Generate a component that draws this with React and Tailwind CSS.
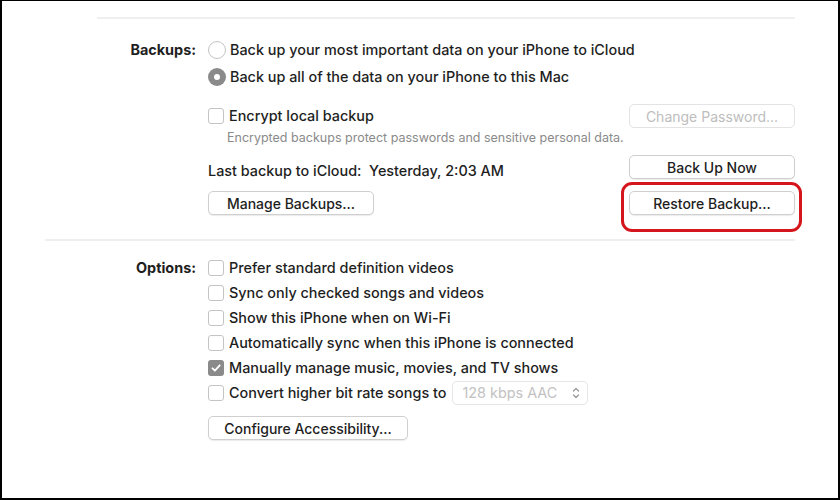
function Radio({ checked }) {
  if (checked) {
    return (
      <span className="w-[18px] h-[18px] rounded-full bg-[#8a8a8a] flex items-center justify-center shrink-0">
        <span className="w-[6px] h-[6px] rounded-full bg-white" />
      </span>
    );
  }
  return (
    <span className="w-[18px] h-[18px] rounded-full border border-[#c4c4c4] bg-white shrink-0" />
  );
}

function Checkbox({ checked }) {
  if (checked) {
    return (
      <span className="w-[16px] h-[16px] rounded-[3px] bg-[#8a8a8a] flex items-center justify-center shrink-0">
        <svg width="12" height="12" viewBox="0 0 12 12" fill="none">
          <path
            d="M2.5 6.3l2.4 2.4 4.8-5.4"
            stroke="#fff"
            strokeWidth="1.8"
            strokeLinecap="round"
            strokeLinejoin="round"
          />
        </svg>
      </span>
    );
  }
  return (
    <span className="w-[16px] h-[16px] rounded-[3px] border border-[#c4c4c4] bg-white shrink-0" />
  );
}

function Button({ children, className = "", disabled }) {
  return (
    <div
      className={
        "h-[24px] flex items-center justify-center bg-white border rounded-[5px] text-[14px] " +
        (disabled
          ? "text-[#bdbdbd] font-normal border-[#e3e3e3] "
          : "text-[#1e1e1e] border-[#cfcfcf] shadow-[0_1px_1px_rgba(0,0,0,0.08)] ") +
        className
      }
    >
      {children}
    </div>
  );
}

function Option({ checked, children }) {
  return (
    <div className="flex items-center gap-[5px] h-[18px]">
      <Checkbox checked={checked} />
      <span>{children}</span>
    </div>
  );
}

export default function App() {
  return (
    <div className="w-[840px] h-[500px] bg-white border-t border-l-2 border-r-2 border-b-2 border-black overflow-hidden font-['Inter','Liberation_Sans',sans-serif] text-[14.4px] font-medium text-[#1e1e1e]">
      <div className="ml-[95px] mt-[16px] w-[698px] h-[2px] bg-[#efefef]" />

      <div className="flex mt-[22px]">
        <div className="w-[194px] shrink-0 text-right font-bold h-[18px] leading-[18px]">
          Backups:
        </div>
        <div className="ml-[12px] w-[587px] flex flex-col">
          <div className="flex items-center gap-[4px] h-[18px]">
            <Radio />
            <span>Back up your most important data on your iPhone to iCloud</span>
          </div>
          <div className="flex items-center gap-[4px] h-[18px] mt-[9px]">
            <Radio checked />
            <span>Back up all of the data on your iPhone to this Mac</span>
          </div>

          <div className="flex items-center justify-between h-[24px] mt-[18px]">
            <div className="flex items-center gap-[5px]">
              <Checkbox />
              <span>Encrypt local backup</span>
            </div>
            <Button disabled className="w-[166px]">
              Change Password...
            </Button>
          </div>
          <div className="mt-[3px] h-[14px] leading-[14px] text-[12.5px] font-normal text-[#8a8a8a] pl-[19px]">
            Encrypted backups protect passwords and sensitive personal data.
          </div>

          <div className="flex justify-between h-[24px] mt-[10px]">
            <div className="pt-[7px] leading-[18px]">
              Last backup to iCloud:&nbsp; Yesterday, 2:03 AM
            </div>
            <Button className="w-[166px]">Back Up Now</Button>
          </div>

          <div className="flex justify-between mt-[12px]">
            <Button className="w-[166px]">Manage Backups...</Button>
            <div className="relative">
              <Button className="w-[166px]">Restore Backup...</Button>
              <span className="absolute left-[-8px] right-[-7px] top-[-9px] bottom-[-17px] border-[3px] border-[#d4151c] rounded-[11px]" />
            </div>
          </div>
        </div>
      </div>

      <div className="ml-[43px] mt-[24px] w-[750px] h-[2px] bg-[#efefef]" />

      <div className="flex mt-[18px]">
        <div className="w-[194px] shrink-0 text-right font-bold h-[18px] leading-[18px]">
          Options:
        </div>
        <div className="ml-[12px] flex flex-col gap-[7px]">
          <Option>Prefer standard definition videos</Option>
          <Option>Sync only checked songs and videos</Option>
          <Option>Show this iPhone when on Wi-Fi</Option>
          <Option>Automatically sync when this iPhone is connected</Option>
          <Option checked>Manually manage music, movies, and TV shows</Option>
          <div className="flex items-center gap-[5px] h-[24px] -mt-[3px]">
            <Checkbox />
            <span>Convert higher bit rate songs to</span>
            <div className="ml-[1px] w-[136px] h-[24px] border border-[#e6e6e6] rounded-[5px] flex items-center justify-between pl-[9px] pr-[6px] font-normal text-[#c2c2c2]">
              <span>128 kbps AAC</span>
              <svg width="10" height="14" viewBox="0 0 10 14" fill="none">
                <path
                  d="M2.5 5l2.5-2.5L7.5 5M2.5 9l2.5 2.5L7.5 9"
                  stroke="#9a9a9a"
                  strokeWidth="1.3"
                  strokeLinecap="round"
                  strokeLinejoin="round"
                />
              </svg>
            </div>
          </div>
          <Button className="w-[200px] mt-[4px]">Configure Accessibility...</Button>
        </div>
      </div>
    </div>
  );
}
